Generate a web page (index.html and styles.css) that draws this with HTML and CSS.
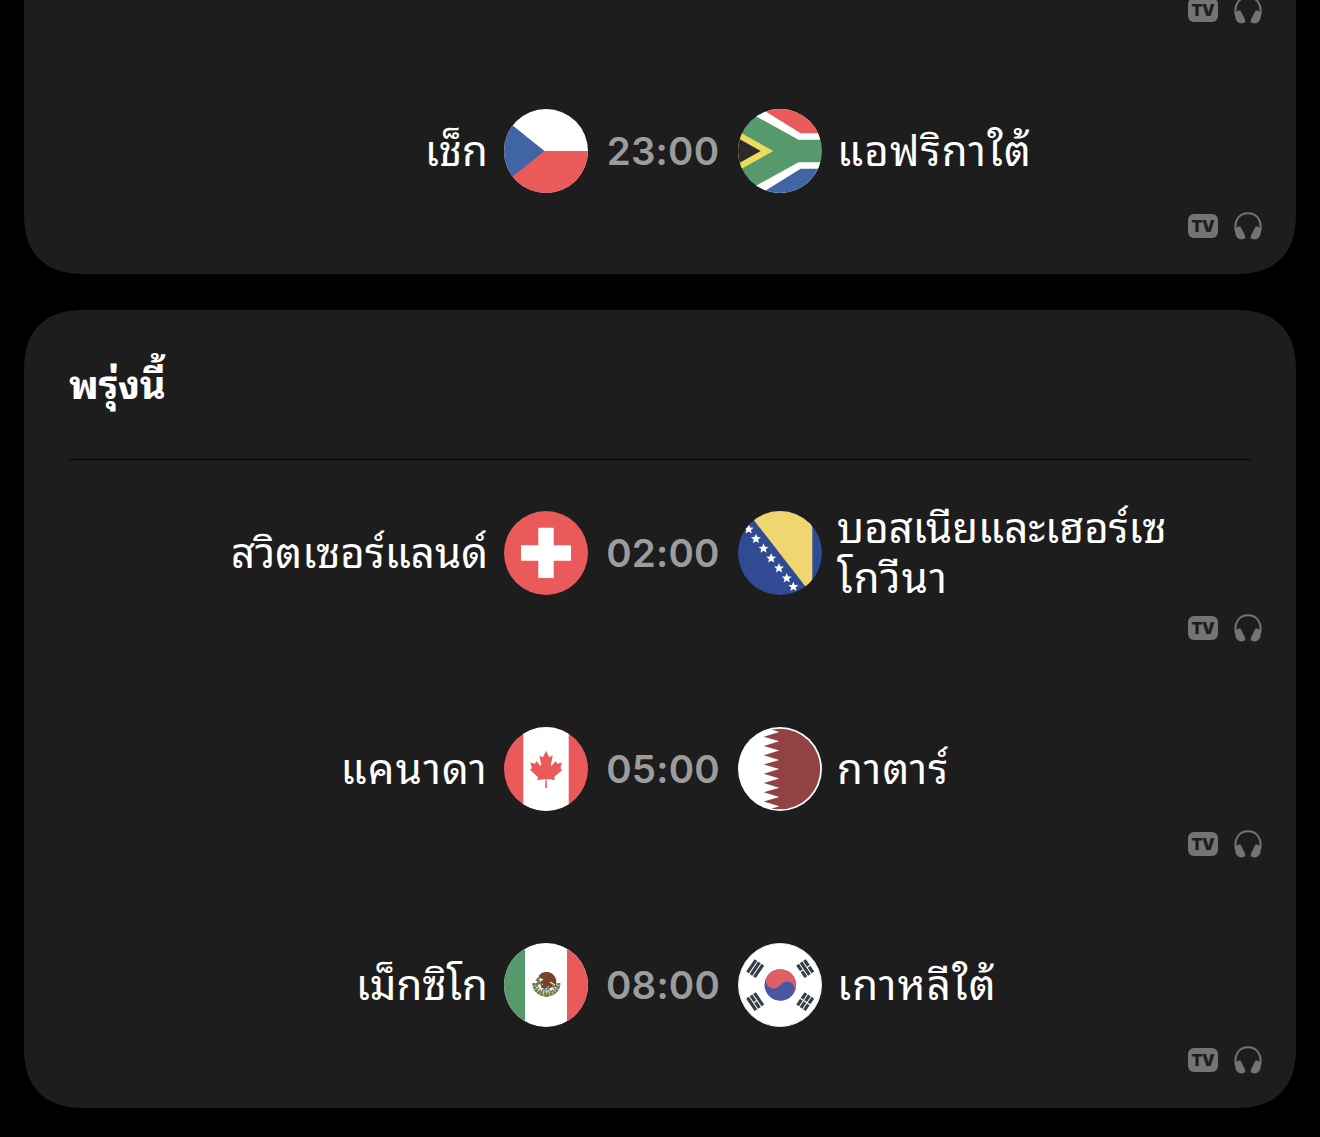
FILE: index.html
```
<!DOCTYPE html>
<html lang="th">
<head>
    <meta charset="UTF-8">
    <meta name="viewport" content="width=device-width, initial-scale=1.0">
    <title>ตารางการแข่งขัน</title>
    <link rel="stylesheet" href="styles.css">
</head>
<body>
    <!-- shared icons -->
    <svg class="defs" width="0" height="0">
        <defs>
            <clipPath id="round"><circle cx="42" cy="42" r="42"/></clipPath>
            <symbol id="headphones" viewBox="0 0 28 28">
                <path d="M1.700 19C-.2 8 5.500 1.300 14 1.300S28.200 8 26.300 19" fill="none" stroke="currentColor" stroke-width="2"/>
                <path id="cup" d="M4.600 14.600c1-.4 1.900 0 2.400.9l4 7.900c.8 1.700.2 3.200-1.400 3.700-2.700.9-5.200.2-6.900-2.100C1.200 22.600.5 18.600 1.800 16.400c.7-1 1.700-1.600 2.800-1.800z" fill="currentColor"/>
                <use href="#cup" transform="matrix(-1 0 0 1 28 0)"/>
            </symbol>
            <path id="star" d="M0-5.200L1.400-1.800 5-1.600 2.200.7 3.100 4.200 0 2.300-3.100 4.200-2.200.7-5-1.600-1.400-1.800z"/>
        </defs>
    </svg>

    <section class="card card-first">
        <div class="match match-cut">
            <div class="media">
                <span class="tv">TV</span>
                <svg class="headphones"><use href="#headphones"/></svg>
            </div>
        </div>
        <div class="match">
            <div class="teams">
                <span class="team home">เช็ก</span>
                <svg class="flag" viewBox="0 0 84 84">
                    <g clip-path="url(#round)">
                        <rect width="84" height="84" fill="#fff"/>
                        <rect y="42" width="84" height="42" fill="#ea5a5a"/>
                        <path d="M-12 0L40.500 42-12 84z" fill="#4164a5"/>
                    </g>
                </svg>
                <span class="time">23:00</span>
                <svg class="flag" viewBox="0 0 84 84">
                    <g clip-path="url(#round)">
                        <rect width="84" height="84" fill="#56996c"/>
                        <path d="M4-.5L60.500 30.700H84V-1zM4 84.500L60.500 53.300H84V85z" fill="#fff"/>
                        <path d="M22-1L62.700 24.300H84V-1z" fill="#ea5a5a"/>
                        <path d="M22 85L62.700 59.700H84V85z" fill="#4164a5"/>
                        <path d="M-4 20L35.300 42-4 64z" fill="#ebdc5e"/>
                        <path d="M-4 27L22.700 42-4 57z" fill="#2b2b2b"/>
                    </g>
                </svg>
                <span class="team away spaced">แอฟริกาใต้</span>
            </div>
            <div class="media">
                <span class="tv">TV</span>
                <svg class="headphones"><use href="#headphones"/></svg>
            </div>
        </div>
    </section>

    <section class="card">
        <h2>พรุ่งนี้</h2>
        <div class="match">
            <div class="teams">
                <span class="team home">สวิตเซอร์แลนด์</span>
                <svg class="flag" viewBox="0 0 84 84">
                    <circle cx="42" cy="42" r="42" fill="#ea5a5a"/>
                    <path d="M34.300 16.800h15.400v17.500H67v15.400H49.700V67H34.300V49.700H17V34.300h17.300z" fill="#fff"/>
                </svg>
                <span class="time">02:00</span>
                <svg class="flag" viewBox="0 0 84 84">
                    <g clip-path="url(#round)">
                        <rect width="84" height="84" fill="#314a94"/>
                        <path d="M8.800 0h65.500v84.300z" fill="#efd671"/>
                        <g fill="#fff">
                            <use href="#star" x="10.700" y="18.300"/>
                            <use href="#star" x="17.900" y="27.900"/>
                            <use href="#star" x="25.500" y="37.500"/>
                            <use href="#star" x="33.200" y="47.400"/>
                            <use href="#star" x="41" y="57.200"/>
                            <use href="#star" x="48.700" y="67.200"/>
                            <use href="#star" x="55.400" y="75.800"/>
                        </g>
                    </g>
                </svg>
                <span class="team away">บอสเนียและเฮอร์เซ<br><span class="spaced">โกวีนา</span></span>
            </div>
            <div class="media">
                <span class="tv">TV</span>
                <svg class="headphones"><use href="#headphones"/></svg>
            </div>
        </div>
        <div class="match">
            <div class="teams">
                <span class="team home spaced">แคนาดา</span>
                <svg class="flag" viewBox="0 0 84 84">
                    <g clip-path="url(#round)">
                        <rect width="84" height="84" fill="#ea5a5a"/>
                        <rect x="19.300" width="45.400" height="84" fill="#fff"/>
                        <path transform="translate(1.700 10.900) scale(.128 .134)" fill="#ea5a5a" d="M201 232l-13.300 4.400 61.400 54c4.700 13.700-1.600 17.800-5.600 25l66.600-8.400-1.600 67 13.900-.3-3.100-66.600 66.700 8c-4.100-8.700-7.800-13.300-4-27.200l61.300-51-10.700-4c-8.800-6.800 3.800-32.600 5.600-48.900 0 0-35.700 12.300-38 5.800l-9.300-17.500-32.600 35.800c-3.500.9-5-.5-5.900-3.500l15-74.800-23.800 13.400c-2 .9-4 .1-5.200-2.200l-23-46-23.600 47.800c-1.800 1.700-3.600 1.900-5 .7L264 130.800l13.700 74.100c-1.100 3-3.700 3.800-6.700 2.200l-31.200-35.300c-4 6.500-6.800 17.100-12.200 19.500-5.400 2.300-23.500-4.500-35.600-7 4.200 14.800 17 39.600 9 47.700z"/>
                    </g>
                </svg>
                <span class="time">05:00</span>
                <svg class="flag" viewBox="0 0 84 84">
                    <clipPath id="inner"><circle cx="42" cy="42" r="40.200"/></clipPath>
                    <circle cx="42" cy="42" r="42" fill="#fff"/>
                    <path clip-path="url(#inner)" fill="#934243" d="M84 0H25.700L41.300 5 25.700 9.700l15.600 4.600-15.600 4.600 15.600 4.700L25.700 28.200l15.600 4.700-15.600 4.600 15.600 4.600-15.600 4.700 15.600 4.600-15.600 4.700 15.600 4.600-15.600 4.600 15.600 4.700-15.600 4.600L41.300 79.300 25.700 84H84z"/>
                </svg>
                <span class="team away spaced">กาตาร์</span>
            </div>
            <div class="media">
                <span class="tv">TV</span>
                <svg class="headphones"><use href="#headphones"/></svg>
            </div>
        </div>
        <div class="match">
            <div class="teams">
                <span class="team home">เม็กซิโก</span>
                <svg class="flag" viewBox="0 0 84 84">
                    <g clip-path="url(#round)">
                        <rect width="84" height="84" fill="#fff"/>
                        <rect width="21" height="84" fill="#56996c"/>
                        <rect x="63" width="21" height="84" fill="#ea5a5a"/>
                    </g>
                    <!-- coat of arms -->
                    <path d="M30 40c-.5 7 5 12 12.500 12S55 47 54.800 40" fill="none" stroke="#62805a" stroke-width="3.200" stroke-dasharray="2.800 .5"/>
                    <path d="M33 42c1 5 4.500 7.500 9.500 7.500s8-2.500 9.300-7" fill="none" stroke="#94763a" stroke-width="2.400" stroke-dasharray="1.800 .9"/>
                    <path d="M36 34l-3 3 2 1-2 3 4-1 1 4 3-2 3 3 4-2 2 1" fill="none" stroke="#60795a" stroke-width="2"/>
                    <path d="M34.500 33c2-3 5.500-4.600 9-4 5 .6 8.300 4.300 8.800 9l.2 6.600-4-2.600-1.600 3-3-2.200-3 3.400-3.200-1.700 1.200-3.500-3-1.600 2.500-2.700z" fill="#78432b"/>
                    <path d="M46 39l5 3M37 36l2 1" stroke="#f4eee4" stroke-width="1.200"/>
                    <path d="M38 46.800h8" stroke="#4c9aa8" stroke-width="1.600"/>
                    <path d="M41 50h3.200v4H41z" fill="#a5733b"/>
                    <circle cx="37" cy="49" r="1" fill="#c4543f"/>
                    <circle cx="47.500" cy="48.500" r="1" fill="#c4543f"/>
                </svg>
                <span class="time">08:00</span>
                <svg class="flag" viewBox="0 0 84 84">
                    <circle cx="42" cy="42" r="41.500" fill="#fff" stroke="#ececec"/>
                    <g transform="translate(42.300 42) rotate(33.700)">
                        <circle r="15.800" fill="#4956a0"/>
                        <path d="M-15.800 0A15.800 15.800 0 0 1 15.800 0 7.900 7.900 0 0 0 0 0 7.900 7.900 0 0 1-15.800 0z" fill="#dd6068"/>
                    </g>
                    <g stroke="#353e47" stroke-width="3.200">
                        <path transform="translate(17.200 25.600) rotate(-56)" d="M-7.500-4.200h15M-7.500 0h15M-7.500 4.200h15"/>
                        <path transform="translate(67.200 25.600) rotate(56)" d="M-7.500-4.200h6.900M.6-4.200h6.900M-7.500 0h15M-7.500 4.200h6.900M.6 4.200h6.900"/>
                        <path transform="translate(17.200 58.600) rotate(56)" d="M-7.500-4.200h15M-7.500 0h6.900M.6 0h6.900M-7.500 4.200h15"/>
                        <path transform="translate(67.200 58.600) rotate(-56)" d="M-7.500-4.200h6.900M.6-4.200h6.900M-7.500 0h6.900M.6 0h6.900M-7.500 4.200h6.900M.6 4.200h6.900"/>
                    </g>
                </svg>
                <span class="team away spaced">เกาหลีใต้</span>
            </div>
            <div class="media">
                <span class="tv">TV</span>
                <svg class="headphones"><use href="#headphones"/></svg>
            </div>
        </div>
    </section>
</body>
</html>
```
FILE: styles.css
```
* {
    box-sizing: border-box;
}

body {
    margin: 0;
    height: 1137px;
    padding: 0 24px;
    background-color: #000;
    color: #fff;
    font-family: "Noto Sans Thai Looped", "Noto Looped Thai", Loma, Waree, "Noto Sans Thai", "Noto Sans", sans-serif;
    overflow: hidden;
}

.defs {
    display: block;
}

.card {
    background-color: #1d1d1d;
    border-radius: 60px;
    corner-shape: superellipse(1.25);
    margin-bottom: 36px;
    overflow: hidden;
}

.card-first {
    border-top-left-radius: 0;
    border-top-right-radius: 0;
}

h2 {
    margin: 0 45px;
    height: 150px;
    border-bottom: 1px solid #000;
    font-size: 40px;
    font-weight: 700;
    letter-spacing: -0.4px;
    line-height: 143px;
}

.match {
    height: 216px;
    padding-top: 43px;
}

.match-cut {
    display: flex;
    justify-content: flex-end;
    align-items: flex-start;
    height: 58px;
    padding-top: 0;
}

.match-cut .media {
    margin-top: -5px;
}

.teams {
    display: grid;
    grid-template-columns: 464px 84px 118px 84px 1fr;
    grid-template-rows: 100px;
    column-gap: 16px;
    align-items: center;
    height: 100px;
}

.team {
    padding-bottom: 8px;
    font-size: 42px;
    line-height: 50px;
    white-space: nowrap;
}

.home {
    text-align: right;
}

.away {
    margin-left: -1px;
}

.spaced {
    letter-spacing: 1.2px;
}

.flag {
    display: block;
    width: 84px;
    height: 84px;
}

.time {
    color: #9c9c9c;
    font-family: Inter, sans-serif;
    font-size: 38.5px;
    font-weight: 600;
    letter-spacing: 0.2px;
    text-align: center;
    white-space: nowrap;
}

.media {
    display: flex;
    justify-content: flex-end;
    align-items: center;
    gap: 16px;
    height: 30px;
    margin-top: 10px;
    padding-right: 34px;
    color: #747474;
}

.tv {
    width: 30px;
    height: 24px;
    border-radius: 6px;
    background-color: #747474;
    color: #1d1d1d;
    font-family: Inter, sans-serif;
    font-size: 16px;
    font-weight: 900;
    letter-spacing: -0.3px;
    line-height: 24px;
    text-align: center;
}

.headphones {
    width: 28px;
    height: 28px;
}
```
